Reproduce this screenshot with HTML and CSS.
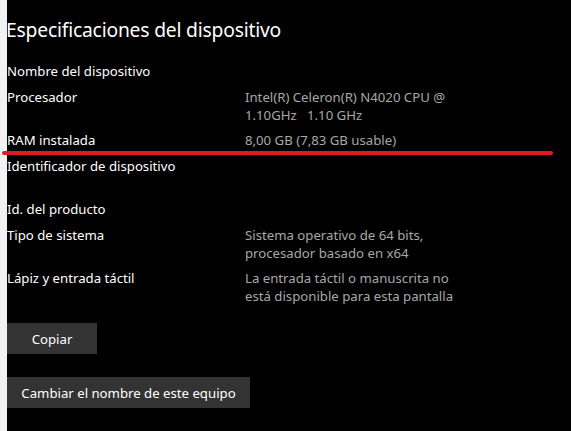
FILE: index.html
```html
<!DOCTYPE html>
<html lang="es">
<head>
<meta charset="utf-8">
<title>Especificaciones del dispositivo</title>
<link rel="stylesheet" href="styles.css">
</head>
<body>
<div class="page">
  <h1 class="title">Especificaciones del dispositivo</h1>
  <div class="specs">
    <div class="label">Nombre del dispositivo</div>
    <div class="value"></div>

    <div class="label">Procesador</div>
    <div class="value">Intel(R) Celeron(R) N4020 CPU @<br>1.10GHz&nbsp;&nbsp;&nbsp;1.10 GHz</div>

    <div class="label">RAM instalada</div>
    <div class="value">8,00 GB (7,83 GB usable)</div>

    <div class="label">Identificador de dispositivo</div>
    <div class="value value-hidden"></div>

    <div class="label">Id. del producto</div>
    <div class="value"></div>

    <div class="label">Tipo de sistema</div>
    <div class="value">Sistema operativo de 64 bits,<br>procesador basado en x64</div>

    <div class="label">Lápiz y entrada táctil</div>
    <div class="value">La entrada táctil o manuscrita no<br>está disponible para esta pantalla</div>
  </div>
  <div class="actions">
    <button class="btn btn-copy">Copiar</button>
    <button class="btn btn-rename">Cambiar el nombre de este equipo</button>
  </div>
  <div class="underline"></div>
</div>
</body>
</html>
```

FILE: styles.css
```css
html, body {
  margin: 0;
  padding: 0;
  background: #000;
}

body {
  width: 571px;
  height: 431px;
  overflow: hidden;
  font-family: "Segoe UI", "Noto Sans", "Open Sans", sans-serif;
  color: #fff;
}

.page {
  position: relative;
  height: 431px;
  border-left: 7px solid #f2f2f2;
  box-sizing: border-box;
  padding-top: 16px;
}

.title {
  margin: 0;
  font-size: 19.3px;
  font-weight: 400;
  line-height: 28px;
  letter-spacing: -0.2px;
  margin-left: -1px;
}

.specs {
  margin-top: 18px;
  display: grid;
  grid-template-columns: 238px 1fr;
  row-gap: 7.5px;
  font-size: 13.2px;
  line-height: 18px;
}

.label {
  color: #fff;
}

.value {
  color: #a8a8a8;
  min-height: 18px;
}

.value-hidden {
  min-height: 36px;
}

.actions {
  margin-top: 18px;
  display: flex;
  flex-direction: column;
  align-items: flex-start;
  gap: 23px;
}

.btn {
  background: #333;
  color: #fff;
  border: 0;
  margin: 0;
  font-family: inherit;
  font-size: 13.2px;
  height: 31px;
  padding: 0;
  white-space: nowrap;
  text-align: center;
  cursor: pointer;
}

.btn-copy {
  width: 90px;
}

.btn-rename {
  width: 243px;
}

.underline {
  position: absolute;
  left: -5px;
  top: 151px;
  width: 551px;
  height: 4px;
  border-radius: 3px;
  background: #e01a22;
}
```
